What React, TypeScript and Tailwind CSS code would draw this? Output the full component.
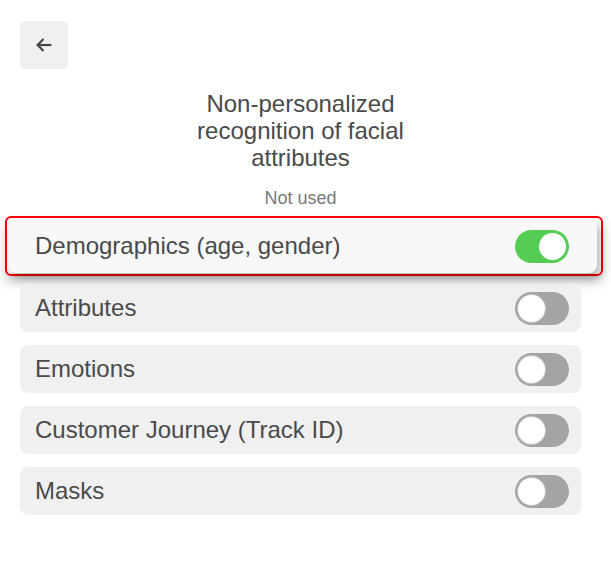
import { useState } from 'react';

type Feature = { key: string; label: string };

const FEATURES: Feature[] = [
  { key: 'demographics', label: 'Demographics (age, gender)' },
  { key: 'attributes', label: 'Attributes' },
  { key: 'emotions', label: 'Emotions' },
  { key: 'journey', label: 'Customer Journey (Track ID)' },
  { key: 'masks', label: 'Masks' },
];

function Toggle({ on, onClick }: { on: boolean; onClick: () => void }) {
  return (
    <button
      onClick={onClick}
      className={`flex h-[33px] w-[54px] shrink-0 items-center rounded-full p-[3px] ${
        on ? 'justify-end bg-[#55cd55]' : 'justify-start bg-[#a4a4a4]'
      }`}
    >
      <span
        className={`block h-[27px] w-[27px] rounded-full bg-white ${on ? '' : 'ring-1 ring-[#c4c4c4]'}`}
      />
    </button>
  );
}

export default function App() {
  const [enabled, setEnabled] = useState<Record<string, boolean>>({ demographics: true });
  const toggle = (k: string) => setEnabled((s) => ({ ...s, [k]: !s[k] }));

  return (
    <div
      className="min-h-[563px] w-[611px] bg-white pl-5 pr-[30px] pt-[21px] text-[#4a4a4a]"
      style={{ fontFamily: '"Liberation Sans", Arial, sans-serif' }}
    >
      <button className="flex h-12 w-12 items-center justify-center rounded-md bg-[#f0f0f0]">
        <svg width="22" height="22" viewBox="0 0 24 24" fill="none" stroke="#444" strokeWidth="2.4">
          <path d="M20 12H5" />
          <path d="M11.5 5.5L5 12l6.5 6.5" />
        </svg>
      </button>

      <h1 className="mx-auto mt-[21px] w-[290px] text-center text-[24px] leading-[27px] font-normal">
        Non-personalized recognition of facial attributes
      </h1>
      <div className="mt-[17px] text-center text-[18px] leading-[21px] text-[#7a7a7a]">Not used</div>

      <div className="mt-[7px] flex flex-col">
        {FEATURES.map((f, i) =>
          i === 0 ? (
            <div
              key={f.key}
              className="-ml-[15px] -mr-[22px] mb-2 rounded-md border-2 border-[#ff0000] pt-px pb-px pl-px pr-1 shadow-[0_7px_12px_rgba(0,0,0,0.18)]"
            >
              <div className="flex h-[54px] items-center justify-between rounded-lg bg-[#f8f8f8] pl-[27px] pr-[28px] shadow-[3px_5px_8px_rgba(0,0,0,0.3)]">
                <span className="text-[24px]">{f.label}</span>
                <Toggle on={!!enabled[f.key]} onClick={() => toggle(f.key)} />
              </div>
            </div>
          ) : (
            <div
              key={f.key}
              className="mb-[13px] flex h-12 items-center justify-between rounded-lg bg-[#f0f0f0] pl-[15px] pr-3"
            >
              <span className="text-[24px]">{f.label}</span>
              <Toggle on={!!enabled[f.key]} onClick={() => toggle(f.key)} />
            </div>
          )
        )}
      </div>
    </div>
  );
}
